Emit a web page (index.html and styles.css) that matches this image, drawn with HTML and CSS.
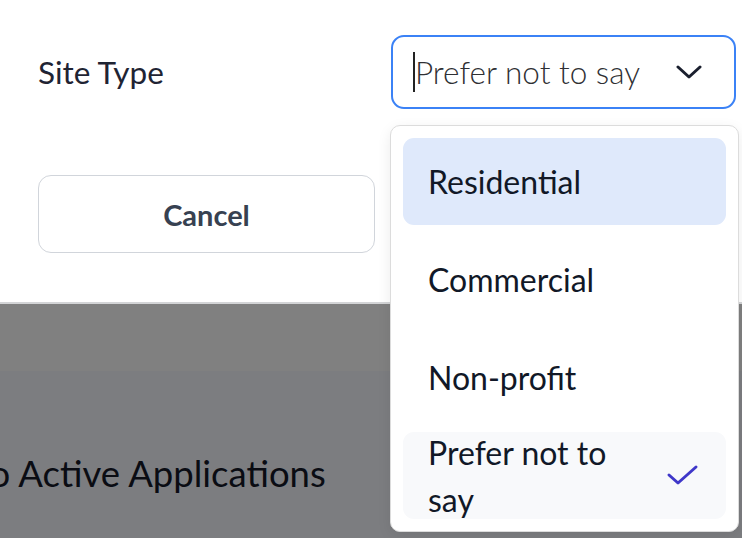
FILE: index.html
```html
<!DOCTYPE html>
<html>
<head>
    <title>Edit Site</title>
    <link rel="stylesheet" href="styles.css">
</head>
<body>
    <div class="modal">
        <div class="field">
            <label class="field-label">Site Type</label>
            <div class="select-wrap">
                <div class="select">
                    <span class="caret"></span>
                    <span class="placeholder">Prefer not to say</span>
                    <svg class="chevron" width="26" height="16" viewBox="0 0 26 16">
                        <polyline points="2,3 13,13 24,3" fill="none" stroke="#1a1f2e" stroke-width="3" stroke-linecap="round" stroke-linejoin="round"/>
                    </svg>
                </div>
                <ul class="options">
                    <li class="option active">Residential</li>
                    <li class="option">Commercial</li>
                    <li class="option">Non-profit</li>
                    <li class="option selected">
                        <span class="option-text">Prefer not to say</span>
                        <svg class="check" width="34" height="24" viewBox="0 0 34 24">
                            <polyline points="3,11 12,19 30,3" fill="none" stroke="#3f37c9" stroke-width="3" stroke-linecap="round" stroke-linejoin="round"/>
                        </svg>
                    </li>
                </ul>
            </div>
        </div>
        <div class="actions">
            <button class="btn">Cancel</button>
        </div>
    </div>

    <div class="backdrop">
        <div class="backdrop-band"></div>
        <div class="backdrop-body">
            <h2 class="page-title">Go to Active Applications</h2>
        </div>
    </div>
</body>
</html>
```

FILE: styles.css
```css
body {
    margin: 0;
    font-family: Lato, "Liberation Sans", sans-serif;
    background: #7c7d80;
    height: 538px;
    overflow: hidden;
}

.modal {
    background: white;
    padding: 35px 6px 49px 38px;
    border-bottom: 2px solid #d3d4d6;
}

.field {
    display: grid;
    grid-template-columns: 353px 345px;
    align-items: center;
}

.field-label {
    font-size: 31.5px;
    color: #1f2433;
}

.select-wrap {
    position: relative;
}

.select {
    height: 70px;
    border: 2px solid #3b82f6;
    border-radius: 13px;
    display: flex;
    align-items: center;
    padding: 0 32px 0 20px;
}

.caret {
    width: 2px;
    height: 40px;
    background: #222;
}

.placeholder {
    flex: 1;
    font-size: 31.5px;
    font-weight: 300;
    color: #2f3034;
}

.chevron {
    display: block;
}

.options {
    position: absolute;
    top: 90px;
    left: -1px;
    width: 323px;
    margin: 0;
    padding: 12px;
    list-style: none;
    background: white;
    border: 1px solid #dcdcdc;
    border-radius: 10px;
    box-shadow: 0 4px 14px rgba(0, 0, 0, 0.08);
    display: flex;
    flex-direction: column;
    gap: 11px;
    z-index: 2;
}

.option {
    height: 87px;
    padding: 0 26px 0 25px;
    border-radius: 11px;
    display: flex;
    align-items: center;
    font-size: 32px;
    color: #111827;
}

.option.active {
    background: #dfe9fb;
}

.option.selected {
    background: #f8f9fb;
    line-height: 47px;
}

.option-text {
    width: 200px;
    flex: 1;
    padding-right: 40px;
}

.check {
    display: block;
}

.actions {
    display: grid;
    grid-template-columns: 337px 345px;
    column-gap: 16px;
    margin-top: 66px;
}

.btn {
    height: 78px;
    background: white;
    border: 1.5px solid #d1d5db;
    border-radius: 13px;
    font-family: Lato, "Liberation Sans", sans-serif;
    font-size: 29px;
    font-weight: 700;
    color: #374151;
}

.backdrop-band {
    height: 67px;
    background: #808080;
}

.backdrop-body {
    padding-top: 80px;
}

.page-title {
    margin: 0 0 0 -80px;
    font-size: 36.5px;
    font-weight: 400;
    color: #0a0c13;
    white-space: nowrap;
}
```
